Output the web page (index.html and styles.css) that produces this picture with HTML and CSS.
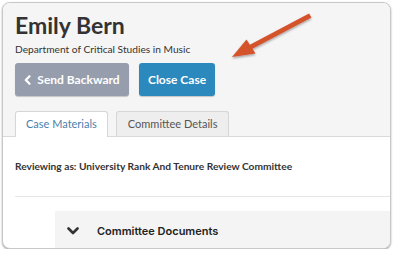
FILE: index.html
```html
<!DOCTYPE html>
<html lang="en">
<head>
  <meta charset="UTF-8">
  <meta name="viewport" content="width=device-width, initial-scale=1.0">
  <title>Emily Bern - Case</title>
  <link rel="stylesheet" href="styles.css">
</head>
<body>
  <div class="window">
    <div class="case-header">
      <h1 class="case-name">Emily Bern</h1>
      <p class="case-dept">Department of Critical Studies in Music</p>
      <div class="actions">
        <button class="btn btn-back">
          <svg class="chev" width="7" height="10" viewBox="0 0 7 10">
            <path d="M5.5 1.2 L1.8 5 L5.5 8.8" fill="none" stroke="#fff" stroke-width="2.2" stroke-linecap="round" stroke-linejoin="round"/>
          </svg>
          Send Backward
        </button>
        <button class="btn btn-close">Close Case</button>
      </div>
      <div class="tabs">
        <div class="tab active">Case Materials</div>
        <div class="tab">Committee Details</div>
      </div>
    </div>
    <div class="case-body">
      <p class="reviewing">Reviewing as: University Rank And Tenure Review Committee</p>
      <hr class="divider">
      <div class="panel">
        <svg class="panel-chev" width="12" height="8" viewBox="0 0 12 8">
          <path d="M1.5 1.5 L6 6 L10.5 1.5" fill="none" stroke="#333" stroke-width="2.6" stroke-linecap="round" stroke-linejoin="round"/>
        </svg>
        <span class="panel-title">Committee Documents</span>
      </div>
    </div>
  </div>

  <svg class="callout" width="393" height="80" viewBox="0 0 393 80">
    <defs>
      <filter id="sh" x="-20%" y="-20%" width="140%" height="160%">
        <feDropShadow dx="0" dy="1.5" stdDeviation="1.2" flood-color="#000" flood-opacity="0.35"/>
      </filter>
    </defs>
    <g filter="url(#sh)" fill="#d4522b">
      <path d="M309 13.5 L311.5 17.5 L250 50 L247.5 46 Z"/>
      <path d="M232 57 L246.5 39.5 L255.5 53.5 Z"/>
    </g>
  </svg>
</body>
</html>
```

FILE: styles.css
```css
body {
  margin: 0;
  background: #fff;
  font-family: Lato, "Liberation Sans", sans-serif;
  color: #333;
}
.window {
  margin: 2px 2px 0 2px;
  height: 245px;
  border: 1px solid #c8c8c8;
  border-radius: 8px;
  box-shadow: 0 1px 2px rgba(0, 0, 0, 0.35);
  overflow: hidden;
  background: #fff;
}
.case-header {
  background: #f5f5f5;
  padding: 7px 0 0 12px;
  border-bottom: 1px solid #d9d9d9;
}
.case-name {
  margin: 0;
  font-size: 23px;
  font-weight: 700;
  line-height: 30px;
  color: #333;
}
.case-dept {
  margin: 2px 0 0;
  font-size: 10.2px;
  line-height: 14px;
}
.actions {
  display: flex;
  gap: 10px;
  margin-top: 7px;
}
.btn {
  display: flex;
  align-items: center;
  justify-content: center;
  height: 33px;
  border: 0;
  border-radius: 3px;
  color: #fff;
  font-family: Lato, "Liberation Sans", sans-serif;
  font-weight: 700;
  font-size: 12px;
  padding: 0;
  white-space: nowrap;
  box-shadow: 0 1px 1px rgba(0, 0, 0, 0.2);
}
.btn-back {
  width: 114px;
  background: #969ead;
}
.btn-back .chev {
  margin-right: 6px;
}
.btn-close {
  width: 76px;
  background: #2b89bd;
}
.tabs {
  display: flex;
  gap: 8px;
  margin-top: 15px;
}
.tab {
  height: 24px;
  line-height: 24px;
  font-size: 11px;
  padding: 0 11px;
  border: 1px solid #d6d6d6;
  border-bottom: 0;
  border-radius: 3px 3px 0 0;
  background: #eeeeee;
  color: #555;
}
.tab.active {
  background: #fff;
  color: #4a7fad;
  margin-bottom: -1px;
  height: 25px;
  padding: 0 10px;
}
.case-body {
  padding: 22px 0 0 12px;
}
.reviewing {
  margin: 0;
  font-size: 10.2px;
  font-weight: 700;
  line-height: 14px;
}
.divider {
  margin: 23px 0 0;
  border: 0;
  border-top: 1px solid #e6e6e6;
}
.panel {
  display: flex;
  align-items: center;
  margin: 14px 0 0 40px;
  height: 40px;
  background: #f4f4f4;
  padding-left: 12px;
}
.panel-chev {
  margin-right: 18px;
}
.panel-title {
  font-family: Inter, "Liberation Sans", sans-serif;
  font-size: 11px;
  font-weight: 600;
  color: #222;
}
.callout {
  position: absolute;
  left: 0;
  top: 0;
  pointer-events: none;
}
```
